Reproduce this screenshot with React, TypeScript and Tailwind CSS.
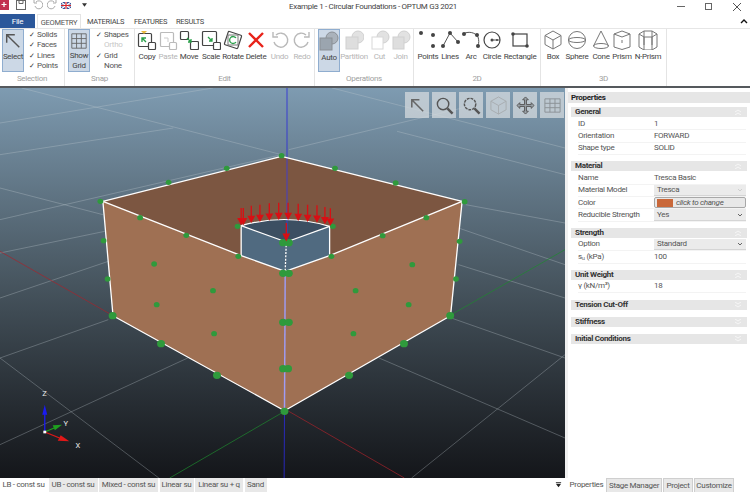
import type { ReactNode } from 'react';

const FONT = 'font-["Roboto","Noto_Sans",sans-serif] tracking-[-0.3px]';

const icons: Record<string, ReactNode> = {
  copy: (
    <>
      <rect x="1.5" y="3.5" width="13" height="13" rx="1" stroke="#444" strokeWidth="1.2" />
      <path d="M4 1h6l-3 3z" fill="#e9b93c" stroke="none" />
      <rect x="11.5" y="12.5" width="7" height="7" rx="1" fill="#fff" stroke="#444" strokeWidth="1.2" />
      <path d="M5 8l4 4M5 12V8h4" stroke="#2aa04a" strokeWidth="1.4" />
    </>
  ),
  paste: (
    <>
      <rect x="2.5" y="2.5" width="13" height="14" rx="1" stroke="#bbb" strokeWidth="1.2" />
      <rect x="11.5" y="12.5" width="7" height="7" rx="1" fill="#fff" stroke="#bbb" strokeWidth="1.2" />
      <path d="M6 8h4v4" stroke="#ccc" />
    </>
  ),
  move: (
    <>
      <rect x="1.5" y="1.5" width="8" height="8" rx="1" stroke="#444" strokeWidth="1.2" />
      <rect x="11.5" y="11.5" width="8" height="8" rx="1" stroke="#444" strokeWidth="1.2" />
      <path d="M8 8l4 4M12 9v3H9" stroke="#2aa04a" strokeWidth="1.3" />
    </>
  ),
  scale: (
    <>
      <rect x="1.5" y="1.5" width="14" height="14" rx="1" stroke="#444" strokeWidth="1.2" />
      <rect x="12.5" y="12.5" width="7" height="7" rx="1" fill="#fff" stroke="#444" strokeWidth="1.2" />
      <path d="M7 7l4 4M11 8v3H8" stroke="#2aa04a" strokeWidth="1.3" />
    </>
  ),
  rotate: (
    <>
      <rect x="3" y="3" width="14" height="14" rx="1" transform="rotate(18 10 10)" stroke="#444" strokeWidth="1.2" />
      <rect x="5" y="5" width="10" height="10" fill="#fff" stroke="#777" />
      <path d="M13 8a3.5 3.5 0 1 0 0 4" stroke="#2aa04a" strokeWidth="1.3" />
    </>
  ),
  del: <path d="M3 3l14 14M17 3L3 17" stroke="#e8231a" strokeWidth="2.4" />,
  undo: <path d="M6 5a7 7 0 1 1-2 7M3 2v5h5" stroke="#b9b9b9" strokeWidth="1.4" />,
  redo: <path d="M14 5a7 7 0 1 0 2 7M17 2v5h-5" stroke="#b9b9b9" strokeWidth="1.4" />,
  auto: (
    <>
      <circle cx="13" cy="7" r="6" fill="#aab2bb" stroke="#8a8f95" />
      <rect x="1" y="7" width="12" height="12" fill="#9ba5af" stroke="#8a8f95" />
    </>
  ),
  partition: (
    <>
      <circle cx="14" cy="7" r="6" fill="#e2e2e2" stroke="#d0d0d0" />
      <rect x="2" y="7" width="12" height="12" fill="#dedede" stroke="#d0d0d0" />
    </>
  ),
  cut: (
    <>
      <circle cx="13" cy="7" r="6" fill="#e2e2e2" stroke="#d0d0d0" />
      <rect x="2" y="7" width="11" height="12" fill="#fff" stroke="#d8d8d8" />
    </>
  ),
  join: (
    <>
      <circle cx="13" cy="7" r="6" fill="#e2e2e2" stroke="#d0d0d0" />
      <rect x="2" y="7" width="11" height="12" fill="#dedede" stroke="#d0d0d0" />
    </>
  ),
  points: (
    <g fill="#444" stroke="none">
      <circle cx="3" cy="3" r="2" />
      <circle cx="15" cy="5" r="2" />
      <circle cx="15" cy="16" r="2" />
    </g>
  ),
  lines: (
    <>
      <path d="M3 16L10 3l8 9" stroke="#555" />
      <g fill="#444" stroke="none">
        <circle cx="3" cy="16" r="2" />
        <circle cx="10" cy="3" r="2" />
        <circle cx="18" cy="12" r="2" />
      </g>
    </>
  ),
  arc: (
    <>
      <path d="M2 4c5-3 12-2 15 3 1 3 1 6 0 9" stroke="#555" />
      <g fill="#444" stroke="none">
        <circle cx="3" cy="4" r="2" />
        <circle cx="16" cy="5" r="2" />
        <circle cx="17" cy="16" r="2" />
      </g>
    </>
  ),
  circle: (
    <>
      <circle cx="10" cy="10" r="8" stroke="#444" strokeWidth="1.2" />
      <circle cx="10" cy="10" r="1.5" fill="#444" stroke="none" />
      <path d="M10 10h8" stroke="#555" />
      <circle cx="15" cy="10" r="1" fill="#444" stroke="none" />
    </>
  ),
  rect: (
    <>
      <rect x="3" y="4" width="14" height="12" stroke="#444" strokeWidth="1.2" />
      <circle cx="3" cy="4" r="1.8" fill="#444" stroke="none" />
      <circle cx="17" cy="16" r="1.8" fill="#444" stroke="none" />
    </>
  ),
  box: <path d="M10 1l8 4.5v9L10 19l-8-4.5v-9zM2 5.5L10 10l8-4.5M10 10v9" stroke="#777" />,
  sphere: (
    <>
      <circle cx="10" cy="10" r="8.5" stroke="#777" />
      <ellipse cx="10" cy="10" rx="8.5" ry="2.5" stroke="#777" />
    </>
  ),
  cone: (
    <>
      <path d="M10 1L2.5 16M10 1l7.5 15" stroke="#777" />
      <ellipse cx="10" cy="16" rx="7.5" ry="2.5" stroke="#777" />
    </>
  ),
  prism: <path d="M10 1l8 3v13l-8 2.5L2 17V4zM2 4l8 3 8-3M10 10v3" stroke="#777" />,
  nprism: <path d="M6 1h8l5 3v13l-5 3H6l-5-3V4zM1 4l5 3h8l5-3M6 7v13M14 7v13M6 1v14M14 1v14" stroke="#777" />,
};

type ToolDef = { label: string; icon: string; w: string; off?: boolean; on?: boolean };

const Tool = ({ label, icon, w, off, on }: ToolDef) => (
  <div
    className={`${w} h-[43px] shrink-0 flex flex-col items-center pt-[1px] ${
      on ? 'bg-[#ccd8e6] border border-[#8fadcf]' : ''
    }`}
  >
    <svg viewBox="0 0 20 20" className="w-[20px] h-[20px] shrink-0" fill="none" stroke="#555">
      {icons[icon]}
    </svg>
    <span className={`mt-[1px] text-[8px] leading-[12px] whitespace-nowrap ${off ? 'text-[#b5b5b5]' : 'text-[#444]'}`}>
      {label}
    </span>
  </div>
);

const Group = ({ w, label, children }: { w: string; label: string; children: ReactNode }) => (
  <div className={`${w} shrink-0 h-full flex flex-col border-r border-[#e4e4e4]`}>
    <div className="flex-1 flex items-start">{children}</div>
    <div className="h-[13px] text-center text-[8px] leading-[12px] text-[#a0a0a0]">{label}</div>
  </div>
);

const Checks = ({ items, cls }: { items: [string, boolean, boolean?][]; cls: string }) => (
  <div className={`${cls} pt-[1px] flex flex-col text-[8px] leading-[10.4px] text-[#555]`}>
    {items.map(([t, c, off]) => (
      <div key={t} className="flex">
        <span className="w-[8px] text-[7px] text-[#333]">{c ? '✓' : ''}</span>
        <span className={off ? 'text-[#c8c8c8]' : ''}>{t}</span>
      </div>
    ))}
  </div>
);

const SectionHead = ({ title, open }: { title: string; open?: boolean }) => (
  <div className="h-[10px] mx-[3px] pl-[4px] pr-[5px] bg-[#e6e6e6] flex items-center justify-between">
    <span className="text-[8px] font-bold text-[#333] leading-[10px]">{title}</span>
    <svg viewBox="0 0 8 6" className="w-[8px] h-[6px]" fill="none" stroke="#f6f6f6" strokeWidth="1">
      {open ? <path d="M1 3l3-2 3 2M1 6l3-2 3 2" /> : <path d="M1 0l3 2 3-2M1 3l3 2 3-2" />}
    </svg>
  </div>
);

const Row = ({ label, children }: { label: ReactNode; children: ReactNode }) => (
  <div className="h-[12.4px] ml-[10px] mr-[4px] flex items-center text-[8px] leading-[12px] text-[#555] border-b border-[#f3f3f3]">
    <div className="w-[76px] shrink-0 whitespace-nowrap">{label}</div>
    <div className="flex-1 h-full flex items-center">{children}</div>
  </div>
);

const Dd = ({ v, off }: { v: string; off?: boolean }) => (
  <div className="w-full h-full bg-[#ebebeb] border-b border-[#d5d5d5] flex items-center justify-between pl-[3px] pr-[3px]">
    <span>{v}</span>
    <svg viewBox="0 0 6 4" className="w-[6px] h-[4px]" fill="none" stroke={off ? '#cfcfcf' : '#666'}>
      <path d="M1 1l2 2 2-2" />
    </svg>
  </div>
);

const dots = [
  [278, 340], [467, 283], [628, 241], [780, 203], [928, 241], [1096, 285], [1287, 341], [388, 389], [516, 442],
  [1060, 443], [1181, 389], [287, 458], [298, 573], [1273, 460], [1263, 573], [427, 528], [590, 608], [434, 650],
  [593, 737], [1142, 530], [985, 608], [1132, 650], [979, 737], [658, 415], [660, 505], [922, 415], [918, 505],
];
const bigDots = [
  [312, 683], [446, 767], [601, 862], [967, 862], [1119, 767], [1247, 683], [788, 970],
  [784, 464], [800, 464], [784, 556], [800, 556], [784, 703], [800, 703], [784, 842], [798, 842],
];
const arrows = [
  [668, 360], [674, 360], [696, 353], [720, 350], [746, 346], [772, 344], [798, 344], [826, 347], [852, 350], [878, 352], [900, 357], [915, 361],
];
const grid =
  'M0 105L590 0M60 0L780 200M0 395L780 200M800 185L1300 55M920 0L1565 180M0 300L285 380M1290 350L1565 405M0 495L290 430M1270 420L1565 530M0 630L300 520M1270 530L1565 630M0 810L300 695M1250 690L1565 810M0 810L440 1170M0 1070L520 810M1565 1050L1050 810M1140 1170L1565 800M1100 130L1565 260M0 200L480 120';

const Scene = () => (
  <svg viewBox="0 0 1565 1170" className="w-full h-full block" preserveAspectRatio="none">
    <path d={grid} stroke="#c4ccd2" strokeOpacity="0.38" strokeWidth="2.4" fill="none" />
    <path d="M0 490L313 683M800 970L1120 1170" stroke="#a8232c" strokeWidth="2" />
    <path d="M470 1170L780 975M1250 680L1565 485" stroke="#1f8a2e" strokeWidth="2" />
    <path d="M795 0V205M788 970L787 1170" stroke="#2b2bd8" strokeWidth="2.4" />
    <path d="M780 205L1280 340L913 503L790 550L668 503L285 340Z" fill="#7c5641" />
    <path d="M285 340L668 503L790 550L788 968L313 683Z" fill="#9f7053" />
    <path d="M1280 340L913 503L790 550L788 968L1248 683Z" fill="#9f7053" />
    <path d="M668 413L793 462L790 550L668 503Z" fill="#506a80" />
    <path d="M913 415L793 462L790 550L913 503Z" fill="#506a80" />
    <path d="M668 413Q790 375 913 415L793 462Z" fill="#3c4f62" />
    <path d="M795 205V462" stroke="#3a3ae0" strokeWidth="2.4" />
    <g fill="none" stroke="#fff" strokeWidth="3.6" strokeLinejoin="round">
      <path d="M285 340L780 205L1280 340L1248 683L788 968L313 683Z" />
      <path d="M285 340L668 503L790 550L913 503L1280 340" />
      <path d="M668 503V413Q790 375 913 415V503" />
      <path d="M668 413L793 462L913 415" />
      <path d="M793 462L790 550" strokeDasharray="6 4" />
    </g>
    <path d="M790 550L788 968" stroke="#9f9cf5" strokeWidth="4" />
    {dots.map(([x, y]) => (
      <circle key={`${x}-${y}`} cx={x} cy={y} r="8" fill="#2f9a3c" />
    ))}
    {bigDots.map(([x, y]) => (
      <circle key={`${x}-${y}`} cx={x} cy={y} r="11" fill="#2f9a3c" />
    ))}
    {arrows.map(([x, y]) => (
      <path key={x} d={`M${x} ${y}V${y + 34}M${x - 8} ${y + 32}L${x} ${y + 48}L${x + 8} ${y + 32}Z`} stroke="#d80f14" strokeWidth="3.6" fill="#d80f14" />
    ))}
    <path d="M793 405V440M785 438L793 456L801 438Z" stroke="#d80f14" strokeWidth="3.6" fill="#d80f14" />
    <path d="M124 1032V975" stroke="#1b1bf0" strokeWidth="3.6" />
    <path d="M117 980L124 950L131 980Z" fill="#1b1bf0" />
    <path d="M124 1032L150 1020" stroke="#1fa01f" strokeWidth="3.6" />
    <path d="M146 1012L172 1010L152 1027Z" fill="#1fa01f" />
    <path d="M124 1032L165 1050" stroke="#e01818" strokeWidth="3.6" />
    <path d="M168 1042L192 1060L160 1058Z" fill="#e01818" />
    <rect x="120" y="1028" width="8" height="8" fill="#fff" />
    <g fill="#e8e8e8" fontSize="21" fontFamily="Roboto, sans-serif">
      <text x="117" y="925">Z</text>
      <text x="176" y="1014">Y</text>
      <text x="209" y="1080">X</text>
    </g>
  </svg>
);

const viewBtns: ReactNode[] = [
  <path key="a" d="M4 4l12 12M4 12V4h8" stroke="#666" strokeWidth="1.6" />,
  <g key="b" stroke="#555"><circle cx="8.5" cy="8.5" r="6" strokeWidth="1.5" /><path d="M13 13l5.5 5.5" strokeWidth="2.6" /></g>,
  <g key="c" stroke="#555"><circle cx="8.5" cy="8.5" r="6" strokeWidth="1.5" strokeDasharray="3 1" /><path d="M13 13l5.5 5.5" strokeWidth="2.6" /></g>,
  <path key="d" d="M10 1l8 4.5v9L10 19l-8-4.5v-9zM2 5.5L10 10l8-4.5M10 10v9" stroke="#a8adb0" />,
  <path key="e" d="M10 1l3 3h-2v5h5V7l3 3-3 3v-2h-5v5h2l-3 3-3-3h2v-5H4v2l-3-3 3-3v2h5V4H7z" stroke="#555" fill="#9aa2a8" />,
  <path key="f" d="M2 3h16v14H2zM2 7.7h16M2 12.3h16M7.3 3v14M12.6 3v14" stroke="#8b9196" />,
];

const edit: ToolDef[] = [
  { label: 'Copy', icon: 'copy', w: 'w-[22px]' },
  { label: 'Paste', icon: 'paste', w: 'w-[20px]', off: true },
  { label: 'Move', icon: 'move', w: 'w-[22px]' },
  { label: 'Scale', icon: 'scale', w: 'w-[22px]' },
  { label: 'Rotate', icon: 'rotate', w: 'w-[22px]' },
  { label: 'Delete', icon: 'del', w: 'w-[24px]' },
  { label: 'Undo', icon: 'undo', w: 'w-[23px]', off: true },
  { label: 'Redo', icon: 'redo', w: 'w-[22px]', off: true },
];
const ops: ToolDef[] = [
  { label: 'Auto', icon: 'auto', w: 'w-[22px]', on: true },
  { label: 'Partition', icon: 'partition', w: 'w-[28px]', off: true },
  { label: 'Cut', icon: 'cut', w: 'w-[23px]', off: true },
  { label: 'Join', icon: 'join', w: 'w-[19px]', off: true },
];
const twoD: ToolDef[] = [
  { label: 'Points', icon: 'points', w: 'w-[22px]' },
  { label: 'Lines', icon: 'lines', w: 'w-[22px]' },
  { label: 'Arc', icon: 'arc', w: 'w-[20px]' },
  { label: 'Circle', icon: 'circle', w: 'w-[22px]' },
  { label: 'Rectangle', icon: 'rect', w: 'w-[34px]' },
];
const threeD: ToolDef[] = [
  { label: 'Box', icon: 'box', w: 'w-[22px]' },
  { label: 'Sphere', icon: 'sphere', w: 'w-[26px]' },
  { label: 'Cone', icon: 'cone', w: 'w-[22px]' },
  { label: 'Prism', icon: 'prism', w: 'w-[20px]' },
  { label: 'N-Prism', icon: 'nprism', w: 'w-[32px]' },
];

const bottomTabs = [
  { t: 'LB - const su', w: 'w-[47px] bg-white' },
  { t: 'UB - const su', w: 'w-[49px] bg-[#e8e8e8]' },
  { t: 'Mixed - const su', w: 'w-[59px] bg-[#e8e8e8]' },
  { t: 'Linear su', w: 'w-[34px] bg-[#e8e8e8]' },
  { t: 'Linear su + q', w: 'w-[48px] bg-[#e8e8e8]' },
  { t: 'Sand', w: 'w-[22px] bg-[#e8e8e8]' },
];

export default function App() {
  return (
    <div className={`${FONT} w-[750px] h-[492px] overflow-hidden bg-white flex flex-col text-[#444]`}>
      {/* title bar */}
      <div className="h-[14px] shrink-0 flex items-start relative">
        <div className="flex items-center gap-[4px] h-[10px]">
          <svg viewBox="0 0 9 10" className="w-[9px] h-[10px]"><rect width="9" height="10" fill="#c2304f" /><path d="M4 2v5M1.5 4.5h5" stroke="#fff" strokeWidth="1.2" /></svg>
          <svg viewBox="0 0 10 10" className="w-[10px] h-[10px] ml-[3px]" fill="none" stroke="#666"><rect x=".5" y=".5" width="9" height="9" /><path d="M3 .5v3h4v-3" /></svg>
          <svg viewBox="0 0 10 10" className="w-[10px] h-[10px] ml-[3px]" fill="none" stroke="#aaa"><path d="M3 2a4 4 0 1 1-1 4M1 0v3h3" /></svg>
          <svg viewBox="0 0 10 10" className="w-[10px] h-[10px]" fill="none" stroke="#aaa"><path d="M7 2a4 4 0 1 0 1 4M9 0v3H6" /></svg>
          <svg viewBox="0 0 10 7" className="w-[10px] h-[7px]"><rect width="10" height="7" fill="#26418f" /><path d="M0 0l10 7M10 0L0 7" stroke="#fff" strokeWidth="1.3" /><path d="M5 0v7M0 3.5h10" stroke="#fff" strokeWidth="2.2" /><path d="M5 0v7M0 3.5h10" stroke="#d8232a" strokeWidth="1.2" /></svg>
          <svg viewBox="0 0 6 4" className="ml-[7px] w-[5px] h-[4px]"><path d="M0 0h6L3 4z" fill="#333" /></svg>
        </div>
        <div className="absolute left-[289px] top-0 text-[8px] leading-[14px] text-[#444] whitespace-nowrap">
          Example 1 - Circular Foundations - OPTUM G3 2021
        </div>
        <div className="ml-auto flex items-center h-[13px]">
          <span className="w-[8px] h-[1px] bg-[#666] mr-[20px]" />
          <span className="w-[7px] h-[7px] border border-[#666] mr-[21px]" />
          <svg viewBox="0 0 8 8" className="w-[8px] h-[8px] mr-[9px]" stroke="#555"><path d="M0 0l8 8M8 0L0 8" /></svg>
        </div>
      </div>

      {/* tabs */}
      <div className="h-[14px] shrink-0 flex items-stretch text-[7.5px] leading-[15px] relative">
        <div className="w-[35px] bg-[#2b579a] text-white text-center text-[8px]">File</div>
        <div className="w-[44px] ml-[2px] text-center border-x border-t border-[#e4e4e4] text-[#555]">GEOMETRY</div>
        <div className="ml-[6px] w-[37px] text-[#444]">MATERIALS</div>
        <div className="ml-[10px] w-[32px] text-[#444]">FEATURES</div>
        <div className="ml-[10px] text-[#444]">RESULTS</div>
        <svg viewBox="0 0 8 5" className="absolute right-[2px] top-[5px] w-[8px] h-[5px]" fill="none" stroke="#111" strokeWidth="1.4"><path d="M1 4l3-3 3 3" /></svg>
      </div>

      {/* ribbon */}
      <div className="h-[60px] shrink-0 flex border-t border-[#e6e6e6] border-b-[2px] border-b-[#55595d]">
        <Group w="w-[65px]" label="Selection">
          <div className="ml-[2px]">
            <div className="w-[22px] h-[43px] bg-[#ccd8e6] border border-[#8fadcf] flex flex-col items-center pt-[2px]">
              <svg viewBox="0 0 20 20" className="w-[18px] h-[18px]" fill="none" stroke="#555" strokeWidth="1.6"><path d="M3 3l14 14M3 12V3h9" /></svg>
              <span className="mt-[1px] text-[8px] leading-[12px]">Select</span>
            </div>
          </div>
          <Checks cls="ml-[5px]" items={[['Solids', true], ['Faces', true], ['Lines', true], ['Points', true]]} />
        </Group>
        <Group w="w-[70px]" label="Snap">
          <div className="ml-[3px]">
            <div className="w-[22px] h-[43px] bg-[#ccd8e6] border border-[#8fadcf] flex flex-col items-center pt-[2px]">
              <svg viewBox="0 0 20 20" className="w-[18px] h-[18px]" fill="none" stroke="#666"><path d="M2 2h16v16H2zM2 7.3h16M2 12.6h16M7.3 2v16M12.6 2v16" /></svg>
              <span className="text-[8px] leading-[10px] text-center mt-[1px]">Show Grid</span>
            </div>
          </div>
          <Checks cls="ml-[6px]" items={[['Shapes', true], ['Ortho', false, true], ['Grid', true], ['None', false]]} />
        </Group>
        <Group w="w-[180px]" label="Edit">
          <div className="flex ml-[1px]">{edit.map(t => <Tool key={t.label} {...t} />)}</div>
        </Group>
        <Group w="w-[99px]" label="Operations">
          <div className="flex ml-[3px]">{ops.map(t => <Tool key={t.label} {...t} />)}</div>
        </Group>
        <Group w="w-[127px]" label="2D">
          <div className="flex ml-[3px]">{twoD.map(t => <Tool key={t.label} {...t} />)}</div>
        </Group>
        <Group w="w-[126px]" label="3D">
          <div className="flex ml-[1px]">{threeD.map(t => <Tool key={t.label} {...t} />)}</div>
        </Group>
      </div>

      {/* main */}
      <div className="flex-1 min-h-0 flex bg-[#f0f0f0]">
        <div className="w-[565px] shrink-0 relative bg-linear-to-b from-[#7e9bb1] via-[#47555f] to-[#14161a]">
          <Scene />
          <div className="absolute top-[4px] right-[1px] flex gap-[3px]">
            {viewBtns.map((b, i) => (
              <div key={i} className="w-[24px] h-[26px] bg-[#d4dade]/75 flex items-center justify-center">
                <svg viewBox="0 0 20 20" className="w-[19px] h-[19px]" fill="none">{b}</svg>
              </div>
            ))}
          </div>
        </div>
        <div className="ml-[3px] flex-1 bg-white flex flex-col pt-[4px]">
          <div className="h-[11px] bg-[#e6e6e6] pl-[3px] text-[8px] font-bold leading-[11px] text-[#222]">Properties</div>
          <div className="h-[4px]" />
          <SectionHead title="General" open />
          <div className="pt-[1px]">
            <Row label="ID">1</Row>
            <Row label="Orientation">FORWARD</Row>
            <Row label="Shape type">SOLID</Row>
          </div>
          <div className="h-[6px]" />
          <SectionHead title="Material" open />
          <div className="pt-[1px]">
            <Row label="Name">Tresca Basic</Row>
            <Row label="Material Model"><Dd v="Tresca" off /></Row>
            <Row label="Color">
              <div className="w-full h-full bg-[#e8e8e8] border border-[#a8a8a8] rounded-[2px] flex items-center pl-[2px]">
                <span className="w-[16px] h-[8px] bg-[#c9683a]" />
                <span className="ml-[3px] italic">click to change</span>
              </div>
            </Row>
            <Row label="Reducible Strength"><Dd v="Yes" /></Row>
          </div>
          <div className="h-[6px]" />
          <SectionHead title="Strength" open />
          <div className="pt-[1px]">
            <Row label="Option"><Dd v="Standard" /></Row>
            <Row label={<span>sᵤ (kPa)</span>}>100</Row>
          </div>
          <div className="h-[6px]" />
          <SectionHead title="Unit Weight" open />
          <div className="pt-[1px]">
            <Row label="γ (kN/m³)">18</Row>
          </div>
          <div className="h-[7px]" />
          <SectionHead title="Tension Cut-Off" />
          <div className="h-[7px]" />
          <SectionHead title="Stiffness" />
          <div className="h-[7px]" />
          <SectionHead title="Initial Conditions" />
        </div>
      </div>

      {/* bottom tabs */}
      <div className="h-[14px] shrink-0 flex bg-white text-[8px] leading-[14px] text-[#555]">
        <div className="w-[565px] flex items-stretch relative">
          {bottomTabs.map(({ t, w }) => (
            <div key={t} className={`${w} mr-[1.5px] text-center whitespace-nowrap`}>{t}</div>
          ))}
          <svg viewBox="0 0 8 8" className="ml-auto mr-[3px] mt-[3px] w-[7px] h-[7px]" fill="#222"><path d="M1 1h6v1H1zM1 3h6L4 7z" /></svg>
        </div>
        <div className="ml-[3px] flex items-stretch whitespace-nowrap text-center">
          <div className="w-[37px] mr-[1px]">Properties</div>
          <div className="w-[56px] mr-[1px] bg-[#e8e8e8] border border-b-0 border-[#cfcfcf]">Stage Manager</div>
          <div className="w-[30px] mr-[1px] bg-[#e8e8e8] border border-b-0 border-[#cfcfcf]">Project</div>
          <div className="w-[40px] bg-[#e8e8e8] border border-b-0 border-[#cfcfcf]">Customize</div>
        </div>
      </div>
    </div>
  );
}
